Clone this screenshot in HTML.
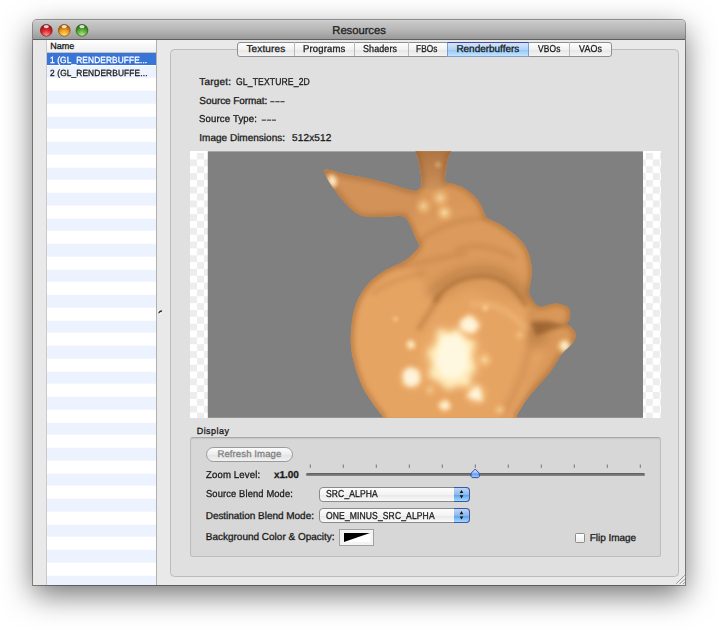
<!DOCTYPE html>
<html><head><meta charset="utf-8">
<style>
*{margin:0;padding:0;box-sizing:border-box}
html,body{width:719px;height:632px;overflow:hidden;background:#fff}
body{position:relative;font-family:"Liberation Sans",sans-serif;color:#1a1a1a}
.a{position:absolute}
.t{position:absolute;white-space:nowrap;font-size:9.6px;line-height:1;-webkit-text-stroke:.3px currentColor;text-rendering:geometricPrecision}
#win{left:33px;top:20px;width:652px;height:565px;background:#e9e9e9;border-radius:4px 4px 0 0;
 box-shadow:0 10px 30px rgba(0,0,0,.55),0 0 0 1px rgba(0,0,0,.38)}
#title{left:0;top:0;width:652px;height:19.5px;border-radius:4px 4px 0 0;
 background:linear-gradient(#d6d6d6 0,#c8c8c8 1.5px,#b8b8b8 50%,#9a9a9a 100%);
 border-bottom:1px solid #5e5e5e}
.tl{position:absolute;top:4.3px;width:12px;height:12px;border-radius:50%}
#red{left:7.3px;background:radial-gradient(circle at 50% 80%,#f7a3a8 0,#e8353a 55%,#a80d10 100%);box-shadow:inset 0 0 0 .6px #7c0f12}
#org{left:25.2px;background:radial-gradient(circle at 50% 80%,#ffe98a 0,#f3a425 55%,#b45d00 100%);box-shadow:inset 0 0 0 .6px #8a4a00}
#grn{left:43px;background:radial-gradient(circle at 50% 80%,#c4ee9c 0,#5fb83e 55%,#2a6d12 100%);box-shadow:inset 0 0 0 .6px #1d5a0c}
.tl::after{content:"";position:absolute;left:3.5px;top:1px;width:5px;height:3px;border-radius:50%;background:rgba(255,255,255,.75)}
</style></head><body>
<div id="win" class="a">
  <div id="title" class="a">
    <svg class="a" style="left:0;top:0" width="100" height="20"><radialGradient id="gr1" cx="50%" cy="85%" r="75%" fx="50%" fy="95%"><stop offset="0" stop-color="#f7a2a6"/><stop offset=".55" stop-color="#e3282d"/><stop offset="1" stop-color="#8e1414"/></radialGradient>
<circle cx="13.3" cy="10.3" r="5.9" fill="url(#gr1)" stroke="#6e1a1a" stroke-width=".7"/>
<ellipse cx="13.3" cy="6.6" rx="2.6" ry="1.7" fill="#fff" opacity=".8"/><radialGradient id="gr2" cx="50%" cy="85%" r="75%" fx="50%" fy="95%"><stop offset="0" stop-color="#ffe27a"/><stop offset=".55" stop-color="#f0a020"/><stop offset="1" stop-color="#a4540a"/></radialGradient>
<circle cx="31.25" cy="10.3" r="5.9" fill="url(#gr2)" stroke="#8a4a10" stroke-width=".7"/>
<ellipse cx="31.25" cy="6.6" rx="2.6" ry="1.7" fill="#fff" opacity=".8"/><radialGradient id="gr3" cx="50%" cy="85%" r="75%" fx="50%" fy="95%"><stop offset="0" stop-color="#c0ec98"/><stop offset=".55" stop-color="#5cb23a"/><stop offset="1" stop-color="#2b6a14"/></radialGradient>
<circle cx="49" cy="10.3" r="5.9" fill="url(#gr3)" stroke="#2a5a18" stroke-width=".7"/>
<ellipse cx="49" cy="6.6" rx="2.6" ry="1.7" fill="#fff" opacity=".8"/></svg>
    
  </div>
</div>

<!-- sidebar list -->
<div class="a" style="left:45.5px;top:39.5px;width:111px;height:545.5px;background:#fff;border-left:1px solid #c9c9c9;border-right:1px solid #b0b0b0;
 background-image:repeating-linear-gradient(#fff 0,#fff 12.75px,#edf3fe 12.75px,#edf3fe 25.5px);background-position:0 12.75px"></div>
<div class="a" style="left:46.5px;top:39.5px;width:109.5px;height:13px;background:linear-gradient(#fff,#f0f0f0);border-bottom:1px solid #c2c2c2"></div>
<div class="a" style="left:46.5px;top:52.5px;width:109.5px;height:12.3px;background:#3875d7"></div>

<!-- tab box -->
<div class="a" style="left:170px;top:48.5px;width:509.3px;height:528px;background:#e0e0e0;border:1px solid #bcbcbc;border-radius:4.5px"></div>

<!-- segmented tabs -->
<div class="a" style="left:237px;top:41.5px;width:375px;height:15px;border:1px solid #8e8e8e;border-radius:3px;background:linear-gradient(#fdfdfd,#f2f2f2 50%,#e6e6e6 51%,#f4f4f4)"></div>
<div class="a" style="left:446.5px;top:41.5px;width:82.5px;height:15px;border:1px solid #7f9ccc;border-top-color:#4a4aa6;border-bottom-color:#8a9cc0;background:linear-gradient(#d3e6fb,#b0d4f8 50%,#93c6f6 51%,#c2e6ff)"></div>
<div class="a" style="left:294px;top:42px;width:1px;height:14px;background:#b8b8b8"></div>
<div class="a" style="left:354px;top:42px;width:1px;height:14px;background:#b8b8b8"></div>
<div class="a" style="left:407.5px;top:42px;width:1px;height:14px;background:#b8b8b8"></div>
<div class="a" style="left:569px;top:42px;width:1px;height:14px;background:#b8b8b8"></div>

<!-- info labels -->

<!-- image area -->
<div class="a" style="left:189.7px;top:151.1px;width:18.3px;height:266.7px;background:conic-gradient(#ededed 25%,#fff 0 50%,#ededed 0 75%,#fff 0);background-size:14px 13.7px;background-position:0 1.55px"></div>
<div class="a" style="left:643px;top:151.1px;width:17.6px;height:266.7px;background:conic-gradient(#ededed 25%,#fff 0 50%,#ededed 0 75%,#fff 0);background-size:14px 13.7px;background-position:-4.2px 1.55px"></div>
<div class="a" style="left:189.7px;top:151.1px;width:470.9px;height:1.6px;background:#fff"></div>
<svg class="a" style="left:190px;top:151px" width="471" height="267" viewBox="190 151 471 267">
  <rect x="207.8" y="151.3" width="435.2" height="266.5" fill="#808080"/>
  
<defs>
 <clipPath id="imgclip"><rect x="207.8" y="151.3" width="435.2" height="266.5"/></clipPath>
 <clipPath id="silclip"><path d="M417.2,145.0 C411.8,147.5 418.0,155.7 418.5,160.0 C419.0,164.3 419.9,166.7 420.4,170.9 C420.9,175.2 422.3,182.2 421.4,185.5 C420.5,188.8 417.9,190.2 415.1,190.7 C412.3,191.2 409.2,189.8 404.7,188.6 C400.2,187.4 394.2,185.1 388.0,183.4 C381.8,181.7 374.1,179.7 367.2,178.2 C360.2,176.7 351.9,175.8 346.3,174.6 C340.7,173.4 337.3,171.7 333.8,170.9 C330.3,170.1 327.0,169.3 325.5,169.6 C324.0,169.9 324.5,170.9 324.8,172.5 C325.1,174.1 325.6,176.0 327.5,179.2 C329.4,182.4 332.8,187.5 335.9,191.7 C339.0,195.9 342.8,200.5 346.3,204.2 C349.8,207.8 353.2,211.5 356.7,213.6 C360.2,215.7 362.0,216.3 367.2,216.8 C372.4,217.3 382.1,216.9 388.0,216.8 C393.9,216.8 399.1,215.5 402.6,216.5 C406.1,217.5 406.8,219.4 409.0,223.0 C411.2,226.6 413.9,234.1 415.6,237.8 C417.3,241.5 418.8,243.0 419.0,245.0 C419.2,247.0 419.0,247.4 416.6,250.0 C414.2,252.6 410.1,257.2 404.5,260.8 C398.9,264.4 388.8,267.9 383.0,271.5 C377.2,275.1 373.2,278.7 369.6,282.3 C366.0,285.9 363.8,289.4 361.5,293.0 C359.2,296.6 357.7,299.3 356.1,303.8 C354.5,308.3 353.0,313.2 352.1,319.9 C351.2,326.6 350.4,336.4 350.8,344.0 C351.2,351.6 353.0,358.9 354.8,365.6 C356.6,372.3 358.8,378.6 361.5,384.4 C364.2,390.2 367.3,395.1 370.9,400.5 C374.5,405.9 379.8,412.6 383.0,416.7 C386.2,420.8 368.5,423.6 390.0,425.0 C411.5,426.4 490.9,426.6 512.0,425.0 C533.1,423.4 514.2,419.8 516.7,415.5 C519.2,411.2 523.2,404.1 527.0,399.0 C530.8,393.9 535.3,389.5 539.4,384.7 C543.5,379.9 547.9,375.3 551.7,370.2 C555.5,365.1 558.6,358.2 562.0,353.8 C565.4,349.4 570.0,346.6 572.3,343.5 C574.6,340.4 576.0,337.9 576.0,335.3 C576.0,332.7 573.8,330.0 572.3,328.1 C570.8,326.2 567.7,325.4 567.2,324.0 C566.7,322.6 569.0,321.7 569.5,319.8 C570.0,317.9 570.6,314.8 570.2,312.6 C569.8,310.4 569.2,308.0 567.2,306.5 C565.2,305.0 560.8,303.8 557.9,303.4 C555.0,303.0 552.8,303.9 549.7,304.4 C546.6,304.9 542.5,307.5 539.4,306.5 C536.3,305.5 532.9,300.9 531.2,298.2 C529.5,295.4 529.1,293.4 529.1,290.0 C529.1,286.6 530.9,282.1 531.3,277.9 C531.7,273.6 532.0,269.3 531.3,264.5 C530.5,259.7 529.4,253.8 526.8,249.0 C524.2,244.2 520.2,239.7 515.7,235.6 C511.2,231.5 504.8,227.4 500.0,224.5 C495.2,221.6 489.6,219.8 487.0,218.0 C484.4,216.2 486.1,216.4 484.6,213.4 C483.1,210.4 481.2,204.1 477.9,200.0 C474.6,195.9 469.2,191.4 465.0,188.6 C460.8,185.8 456.0,184.6 452.7,183.4 C449.4,182.2 446.4,184.1 445.4,181.3 C444.3,178.5 446.0,170.6 446.4,166.7 C446.8,162.8 447.3,161.6 448.0,158.0 C448.7,154.4 455.7,147.2 450.6,145.0 C445.5,142.8 422.6,142.5 417.2,145.0Z"/></clipPath>
 <filter id="b1" x="-50%" y="-50%" width="200%" height="200%"><feGaussianBlur stdDeviation="1.2"/></filter>
 <filter id="b15" x="-50%" y="-50%" width="200%" height="200%"><feGaussianBlur stdDeviation="2"/></filter>
 <filter id="b3" x="-50%" y="-50%" width="200%" height="200%"><feGaussianBlur stdDeviation="3.5"/></filter>
 <filter id="b2" x="-50%" y="-50%" width="200%" height="200%"><feGaussianBlur stdDeviation="2.5"/></filter>
 <filter id="b4" x="-50%" y="-50%" width="200%" height="200%"><feGaussianBlur stdDeviation="5"/></filter>
 <filter id="tex" x="0" y="0" width="100%" height="100%"><feTurbulence type="fractalNoise" baseFrequency="0.04" numOctaves="2" seed="7"/><feColorMatrix type="matrix" values="0 0 0 0 0  0 0 0 0 0  0 0 0 0 0  0 0 0 1 0"/><feDiffuseLighting surfaceScale="3" lighting-color="#fff"><feDistantLight azimuth="225" elevation="45"/></feDiffuseLighting></filter>
 <radialGradient id="hl"><stop offset="0" stop-color="#fff0c4" stop-opacity="1"/><stop offset=".35" stop-color="#ffdc9c" stop-opacity=".7"/><stop offset=".7" stop-color="#ffc880" stop-opacity=".25"/><stop offset="1" stop-color="#f5b070" stop-opacity="0"/></radialGradient>
 <linearGradient id="earg" x1="0" y1="0" x2="0" y2="1"><stop offset="0" stop-color="#a46b3a"/><stop offset=".7" stop-color="#c08550"/><stop offset="1" stop-color="#cf945a"/></linearGradient>
</defs>
<g clip-path="url(#imgclip)">
 <path d="M417.2,145.0 C411.8,147.5 418.0,155.7 418.5,160.0 C419.0,164.3 419.9,166.7 420.4,170.9 C420.9,175.2 422.3,182.2 421.4,185.5 C420.5,188.8 417.9,190.2 415.1,190.7 C412.3,191.2 409.2,189.8 404.7,188.6 C400.2,187.4 394.2,185.1 388.0,183.4 C381.8,181.7 374.1,179.7 367.2,178.2 C360.2,176.7 351.9,175.8 346.3,174.6 C340.7,173.4 337.3,171.7 333.8,170.9 C330.3,170.1 327.0,169.3 325.5,169.6 C324.0,169.9 324.5,170.9 324.8,172.5 C325.1,174.1 325.6,176.0 327.5,179.2 C329.4,182.4 332.8,187.5 335.9,191.7 C339.0,195.9 342.8,200.5 346.3,204.2 C349.8,207.8 353.2,211.5 356.7,213.6 C360.2,215.7 362.0,216.3 367.2,216.8 C372.4,217.3 382.1,216.9 388.0,216.8 C393.9,216.8 399.1,215.5 402.6,216.5 C406.1,217.5 406.8,219.4 409.0,223.0 C411.2,226.6 413.9,234.1 415.6,237.8 C417.3,241.5 418.8,243.0 419.0,245.0 C419.2,247.0 419.0,247.4 416.6,250.0 C414.2,252.6 410.1,257.2 404.5,260.8 C398.9,264.4 388.8,267.9 383.0,271.5 C377.2,275.1 373.2,278.7 369.6,282.3 C366.0,285.9 363.8,289.4 361.5,293.0 C359.2,296.6 357.7,299.3 356.1,303.8 C354.5,308.3 353.0,313.2 352.1,319.9 C351.2,326.6 350.4,336.4 350.8,344.0 C351.2,351.6 353.0,358.9 354.8,365.6 C356.6,372.3 358.8,378.6 361.5,384.4 C364.2,390.2 367.3,395.1 370.9,400.5 C374.5,405.9 379.8,412.6 383.0,416.7 C386.2,420.8 368.5,423.6 390.0,425.0 C411.5,426.4 490.9,426.6 512.0,425.0 C533.1,423.4 514.2,419.8 516.7,415.5 C519.2,411.2 523.2,404.1 527.0,399.0 C530.8,393.9 535.3,389.5 539.4,384.7 C543.5,379.9 547.9,375.3 551.7,370.2 C555.5,365.1 558.6,358.2 562.0,353.8 C565.4,349.4 570.0,346.6 572.3,343.5 C574.6,340.4 576.0,337.9 576.0,335.3 C576.0,332.7 573.8,330.0 572.3,328.1 C570.8,326.2 567.7,325.4 567.2,324.0 C566.7,322.6 569.0,321.7 569.5,319.8 C570.0,317.9 570.6,314.8 570.2,312.6 C569.8,310.4 569.2,308.0 567.2,306.5 C565.2,305.0 560.8,303.8 557.9,303.4 C555.0,303.0 552.8,303.9 549.7,304.4 C546.6,304.9 542.5,307.5 539.4,306.5 C536.3,305.5 532.9,300.9 531.2,298.2 C529.5,295.4 529.1,293.4 529.1,290.0 C529.1,286.6 530.9,282.1 531.3,277.9 C531.7,273.6 532.0,269.3 531.3,264.5 C530.5,259.7 529.4,253.8 526.8,249.0 C524.2,244.2 520.2,239.7 515.7,235.6 C511.2,231.5 504.8,227.4 500.0,224.5 C495.2,221.6 489.6,219.8 487.0,218.0 C484.4,216.2 486.1,216.4 484.6,213.4 C483.1,210.4 481.2,204.1 477.9,200.0 C474.6,195.9 469.2,191.4 465.0,188.6 C460.8,185.8 456.0,184.6 452.7,183.4 C449.4,182.2 446.4,184.1 445.4,181.3 C444.3,178.5 446.0,170.6 446.4,166.7 C446.8,162.8 447.3,161.6 448.0,158.0 C448.7,154.4 455.7,147.2 450.6,145.0 C445.5,142.8 422.6,142.5 417.2,145.0Z" fill="#d99859"/>
 <g clip-path="url(#silclip)">
  <path d="M350.0,342.0 C350.3,328.3 353.0,310.7 358.0,300.0 C363.0,289.3 369.7,284.3 380.0,278.0 C390.3,271.7 410.0,260.0 420.0,262.0 C430.0,264.0 431.7,287.0 440.0,290.0 C448.3,293.0 459.2,281.2 470.0,280.0 C480.8,278.8 495.5,278.8 505.0,283.0 C514.5,287.2 520.3,294.7 527.0,305.0 C533.7,315.3 544.5,332.5 545.0,345.0 C545.5,357.5 535.5,366.7 530.0,380.0 C524.5,393.3 538.3,417.5 512.0,425.0 C485.7,432.5 398.0,432.2 372.0,425.0 C346.0,417.8 359.7,395.8 356.0,382.0 C352.3,368.2 349.7,355.7 350.0,342.0Z" fill="#e6a463" filter="url(#b4)"/>
  <path d="M412.0,232.0 C417.0,224.0 430.3,218.0 440.0,214.0 C449.7,210.0 460.0,206.7 470.0,208.0 C480.0,209.3 491.7,217.0 500.0,222.0 C508.3,227.0 514.8,230.0 520.0,238.0 C525.2,246.0 529.7,259.7 531.0,270.0 C532.3,280.3 533.2,295.0 528.0,300.0 C522.8,305.0 509.7,301.7 500.0,300.0 C490.3,298.3 480.0,290.0 470.0,290.0 C460.0,290.0 450.0,304.7 440.0,300.0 C430.0,295.3 414.7,273.3 410.0,262.0 C405.3,250.7 407.0,240.0 412.0,232.0Z" fill="#dc9b5c" filter="url(#b4)"/>
  <path d="M410.0,140.0 C416.5,135.0 451.8,135.0 458.0,140.0 C464.2,145.0 449.0,162.3 447.0,170.0 C445.0,177.7 448.5,182.7 446.0,186.0 C443.5,189.3 436.7,190.0 432.0,190.0 C427.3,190.0 420.2,189.3 418.0,186.0 C415.8,182.7 420.3,177.7 419.0,170.0 C417.7,162.3 403.5,145.0 410.0,140.0Z" fill="url(#earg)" filter="url(#b1)"/>
  <path d="M322.0,166.0 C324.5,164.5 335.3,170.5 345.0,173.0 C354.7,175.5 368.8,178.3 380.0,181.0 C391.2,183.7 405.3,185.8 412.0,189.0 C418.7,192.2 420.3,195.3 420.0,200.0 C419.7,204.7 416.7,214.3 410.0,217.0 C403.3,219.7 390.0,218.2 380.0,216.0 C370.0,213.8 358.3,209.7 350.0,204.0 C341.7,198.3 334.7,188.3 330.0,182.0 C325.3,175.7 319.5,167.5 322.0,166.0Z" fill="#d29258" filter="url(#b2)"/>
  <path d="M417.2,145.0 C411.8,147.5 418.0,155.7 418.5,160.0 C419.0,164.3 419.9,166.7 420.4,170.9 C420.9,175.2 422.3,182.2 421.4,185.5 C420.5,188.8 417.9,190.2 415.1,190.7 C412.3,191.2 409.2,189.8 404.7,188.6 C400.2,187.4 394.2,185.1 388.0,183.4 C381.8,181.7 374.1,179.7 367.2,178.2 C360.2,176.7 351.9,175.8 346.3,174.6 C340.7,173.4 337.3,171.7 333.8,170.9 C330.3,170.1 327.0,169.3 325.5,169.6 C324.0,169.9 324.5,170.9 324.8,172.5 C325.1,174.1 325.6,176.0 327.5,179.2 C329.4,182.4 332.8,187.5 335.9,191.7 C339.0,195.9 342.8,200.5 346.3,204.2 C349.8,207.8 353.2,211.5 356.7,213.6 C360.2,215.7 362.0,216.3 367.2,216.8 C372.4,217.3 382.1,216.9 388.0,216.8 C393.9,216.8 399.1,215.5 402.6,216.5 C406.1,217.5 406.8,219.4 409.0,223.0 C411.2,226.6 413.9,234.1 415.6,237.8 C417.3,241.5 418.8,243.0 419.0,245.0 C419.2,247.0 419.0,247.4 416.6,250.0 C414.2,252.6 410.1,257.2 404.5,260.8 C398.9,264.4 388.8,267.9 383.0,271.5 C377.2,275.1 373.2,278.7 369.6,282.3 C366.0,285.9 363.8,289.4 361.5,293.0 C359.2,296.6 357.7,299.3 356.1,303.8 C354.5,308.3 353.0,313.2 352.1,319.9 C351.2,326.6 350.4,336.4 350.8,344.0 C351.2,351.6 353.0,358.9 354.8,365.6 C356.6,372.3 358.8,378.6 361.5,384.4 C364.2,390.2 367.3,395.1 370.9,400.5 C374.5,405.9 379.8,412.6 383.0,416.7 C386.2,420.8 368.5,423.6 390.0,425.0 C411.5,426.4 490.9,426.6 512.0,425.0 C533.1,423.4 514.2,419.8 516.7,415.5 C519.2,411.2 523.2,404.1 527.0,399.0 C530.8,393.9 535.3,389.5 539.4,384.7 C543.5,379.9 547.9,375.3 551.7,370.2 C555.5,365.1 558.6,358.2 562.0,353.8 C565.4,349.4 570.0,346.6 572.3,343.5 C574.6,340.4 576.0,337.9 576.0,335.3 C576.0,332.7 573.8,330.0 572.3,328.1 C570.8,326.2 567.7,325.4 567.2,324.0 C566.7,322.6 569.0,321.7 569.5,319.8 C570.0,317.9 570.6,314.8 570.2,312.6 C569.8,310.4 569.2,308.0 567.2,306.5 C565.2,305.0 560.8,303.8 557.9,303.4 C555.0,303.0 552.8,303.9 549.7,304.4 C546.6,304.9 542.5,307.5 539.4,306.5 C536.3,305.5 532.9,300.9 531.2,298.2 C529.5,295.4 529.1,293.4 529.1,290.0 C529.1,286.6 530.9,282.1 531.3,277.9 C531.7,273.6 532.0,269.3 531.3,264.5 C530.5,259.7 529.4,253.8 526.8,249.0 C524.2,244.2 520.2,239.7 515.7,235.6 C511.2,231.5 504.8,227.4 500.0,224.5 C495.2,221.6 489.6,219.8 487.0,218.0 C484.4,216.2 486.1,216.4 484.6,213.4 C483.1,210.4 481.2,204.1 477.9,200.0 C474.6,195.9 469.2,191.4 465.0,188.6 C460.8,185.8 456.0,184.6 452.7,183.4 C449.4,182.2 446.4,184.1 445.4,181.3 C444.3,178.5 446.0,170.6 446.4,166.7 C446.8,162.8 447.3,161.6 448.0,158.0 C448.7,154.4 455.7,147.2 450.6,145.0 C445.5,142.8 422.6,142.5 417.2,145.0Z" fill="none" stroke="#8a5326" stroke-width="6" opacity=".4" filter="url(#b2)"/>
  
 <path d="M418,243 C432,228 460,218 487,218" stroke="#94592a" stroke-width="4" fill="none" opacity=".22" filter="url(#b2)"/>
 <path d="M434,302 C446,284 464,276 484,276 C502,277 516,288 526,306" stroke="#7e4a1c" stroke-width="3" fill="none" opacity=".45" filter="url(#b15)"/>
 <path d="M430,296 C444,278 464,270 486,270 C505,272 518,284 528,300" stroke="#8a5226" stroke-width="10" fill="none" opacity=".3" filter="url(#b4)"/>
 <path d="M440,296 C433,306 426,318 418,330" stroke="#85501f" stroke-width="5" fill="none" opacity=".3" filter="url(#b2)"/>
 <path d="M531,322 L548,321 L568,325.5 L552,330 L536,336 Z" fill="#7a4a20" opacity=".55" filter="url(#b15)"/>
 <ellipse cx="538" cy="335" rx="9" ry="14" fill="#85501f" opacity=".3" filter="url(#b4)"/>
 <path d="M530,308 C534,325 532,345 524,370 C518,388 510,402 502,418" stroke="#8a5226" stroke-width="6" fill="none" opacity=".22" filter="url(#b3)"/>
 <path d="M455,250 C475,242 495,246 515,258" stroke="#94592a" stroke-width="4" fill="none" opacity=".2" filter="url(#b2)"/>
 <path d="M400,268 C420,262 440,258 467,253" stroke="#94592a" stroke-width="4" fill="none" opacity=".2" filter="url(#b2)"/>
 <path d="M372,294 C388,282 405,276 425,273" stroke="#94592a" stroke-width="4" fill="none" opacity=".2" filter="url(#b2)"/>
 <path d="M470,305 C490,300 510,310 527,330" stroke="#ffd9a0" stroke-width="6" fill="none" opacity=".25" filter="url(#b2)"/>

  <circle cx="452" cy="358" r="40" fill="url(#hl)" opacity="0.8"/><path d="M438.0,328.0 L450.0,333.0 L460.0,327.0 L466.0,338.0 L476.0,342.0 L471.0,356.0 L476.0,368.0 L469.0,378.0 L473.0,388.0 L458.0,385.0 L448.0,390.0 L440.0,382.0 L428.0,376.0 L433.0,364.0 L427.0,352.0 L436.0,345.0Z" fill="#ffeec0" opacity="1" filter="url(#b3)"/><path d="M443.0,337.0 L457.0,335.0 L467.0,346.0 L467.0,368.0 L456.0,379.0 L443.0,376.0 L436.0,362.0 L439.0,348.0Z" fill="#fff8e0" opacity="1" filter="url(#b2)"/><circle cx="470" cy="325" r="16" fill="url(#hl)" opacity="0.8"/><path d="M459.8,321.6 L469.8,315.0 L479.7,325.0 L473.1,333.3 L461.4,330.0Z" fill="#fff8e2" opacity="0.9" filter="url(#b2)"/><circle cx="411.6" cy="378" r="17" fill="url(#hl)" opacity="0.8"/><path d="M403.0,372.0 L410.0,367.0 L419.0,371.0 L420.0,382.0 L412.0,387.0 L404.0,384.0Z" fill="#fff8e2" opacity="0.9" filter="url(#b2)"/><circle cx="410.8" cy="345" r="9" fill="url(#hl)" opacity="0.6"/><path d="M407.0,342.0 L412.0,340.0 L415.0,346.0 L410.0,349.0Z" fill="#fff8e2" opacity="0.6" filter="url(#b15)"/><circle cx="476" cy="394" r="16" fill="url(#hl)" opacity="0.8"/><path d="M466.4,396.4 L478.0,384.8 L483.0,401.4Z" fill="#fff8e2" opacity="0.9" filter="url(#b2)"/><circle cx="444.8" cy="405.5" r="11" fill="url(#hl)" opacity="0.7"/><path d="M438.0,405.0 L446.0,400.0 L451.0,407.0 L444.0,410.0Z" fill="#fff8e2" opacity="0.7" filter="url(#b15)"/><circle cx="484.7" cy="359.8" r="11" fill="url(#hl)" opacity="0.55"/><circle cx="564.4" cy="346.7" r="11" fill="url(#hl)" opacity="0.75"/><path d="M560.0,344.0 L566.0,340.0 L570.0,347.0 L563.0,351.0Z" fill="#fff8e2" opacity="0.7" filter="url(#b15)"/><circle cx="485.3" cy="308" r="7" fill="url(#hl)" opacity="0.45"/><circle cx="423.5" cy="206.3" r="11" fill="url(#hl)" opacity="0.55"/><circle cx="440.2" cy="198" r="12" fill="url(#hl)" opacity="0.6"/><circle cx="444.4" cy="212.6" r="11" fill="url(#hl)" opacity="0.7"/><circle cx="332" cy="181" r="9" fill="url(#hl)" opacity="0.8"/><path d="M328.0,174.0 L333.0,176.0 L337.0,186.0 L332.0,187.0Z" fill="#fff8e2" opacity="0.7" filter="url(#b15)"/><circle cx="395.5" cy="319" r="6" fill="url(#hl)" opacity="0.35"/><circle cx="438" cy="164.6" r="6" fill="url(#hl)" opacity="0.3"/><circle cx="500" cy="410" r="9" fill="url(#hl)" opacity="0.45"/><circle cx="520" cy="335" r="9" fill="url(#hl)" opacity="0.3"/><circle cx="430" cy="390" r="10" fill="url(#hl)" opacity="0.35"/>
 </g>
</g>

</svg>

<!-- display box -->
<div class="a" style="left:190px;top:437.2px;width:470.5px;height:120.2px;background:#d7d7d7;border:1px solid #bdbdbd;border-top-color:#a9a9a9;border-radius:3px;box-shadow:inset 0 1px 1px rgba(0,0,0,.08)"></div>
<div class="a" style="left:205.8px;top:447px;width:87px;height:15.3px;border:1px solid #9b9b9b;border-radius:8px;background:linear-gradient(#fbfbfb,#ededed 50%,#e2e2e2 51%,#f2f2f2)"></div>

<div class="a" style="left:305.6px;top:472.8px;width:339.4px;height:3.4px;border-radius:2px;background:linear-gradient(#5a5a5a,#8a8a8a)"></div>
<svg class="a" style="left:0;top:0" width="719" height="632"><rect x="309.8" y="464.5" width="0.9" height="3.4" fill="#6a6a6a"/><rect x="342.8" y="464.5" width="0.9" height="3.4" fill="#6a6a6a"/><rect x="375.8" y="464.5" width="0.9" height="3.4" fill="#6a6a6a"/><rect x="408.8" y="464.5" width="0.9" height="3.4" fill="#6a6a6a"/><rect x="441.8" y="464.5" width="0.9" height="3.4" fill="#6a6a6a"/><rect x="474.8" y="464.5" width="0.9" height="3.4" fill="#6a6a6a"/><rect x="507.8" y="464.5" width="0.9" height="3.4" fill="#6a6a6a"/><rect x="540.8" y="464.5" width="0.9" height="3.4" fill="#6a6a6a"/><rect x="573.8" y="464.5" width="0.9" height="3.4" fill="#6a6a6a"/><rect x="606.8" y="464.5" width="0.9" height="3.4" fill="#6a6a6a"/><rect x="639.8" y="464.5" width="0.9" height="3.4" fill="#6a6a6a"/></svg>
<svg class="a" style="left:0;top:0" width="719" height="632"><defs><linearGradient id="kg" x1="0" y1="0" x2="0" y2="1"><stop offset="0" stop-color="#d9ecff"/><stop offset=".5" stop-color="#8cc0f7"/><stop offset=".55" stop-color="#5a9cef"/><stop offset="1" stop-color="#9fd2ff"/></linearGradient></defs>
<path d="M475.2,469 L479.3,473.2 L479.3,476.6 L478.3,477.6 L472.1,477.6 L471.1,476.6 L471.1,473.2 Z" fill="url(#kg)" stroke="#3b3f9e" stroke-width="0.9"/></svg>


<div class="a" style="left:319px;top:487px;width:150.5px;height:15px;border:1px solid #8a8a8a;border-radius:4px;background:linear-gradient(#fdfdfd,#f3f3f3 50%,#e8e8e8 51%,#f9f9f9)"></div>
<div class="a" style="left:454px;top:487px;width:15.5px;height:15px;border:1px solid #3f56a6;border-left:none;border-radius:0 4px 4px 0;background:linear-gradient(#bcd6f5,#8cb8ee 50%,#5d9bea 51%,#9fdcff)"></div>

<div class="a" style="left:319px;top:508.2px;width:150.5px;height:15px;border:1px solid #8a8a8a;border-radius:4px;background:linear-gradient(#fdfdfd,#f3f3f3 50%,#e8e8e8 51%,#f9f9f9)"></div>
<div class="a" style="left:454px;top:508.2px;width:15.5px;height:15px;border:1px solid #3f56a6;border-left:none;border-radius:0 4px 4px 0;background:linear-gradient(#bcd6f5,#8cb8ee 50%,#5d9bea 51%,#9fdcff)"></div>

<svg class="a" style="left:0;top:0" width="719" height="632">
  <path d="M459.7,493 L461.5,489.9 L463.3,493Z M459.7,495.3 L461.5,498.4 L463.3,495.3Z" fill="#111"/>
  <path d="M459.7,514.2 L461.5,511.1 L463.3,514.2Z M459.7,516.5 L461.5,519.6 L463.3,516.5Z" fill="#111"/>
</svg>

<div class="a" style="left:338.8px;top:528.5px;width:35.5px;height:17.7px;background:#f4f4f4;border:1px solid #a0a0a0"></div>
<svg class="a" style="left:343.8px;top:533.2px" width="26" height="9"><path d="M0,0H26V9H0Z" fill="#fff"/><path d="M0,0H26L0,9Z" fill="#000"/></svg>

<div class="a" style="left:574.8px;top:533.2px;width:9.8px;height:9.5px;border:1px solid #8d8d8d;border-radius:1.5px;background:linear-gradient(#fff,#ececec)"></div>

<svg class="a" style="left:0;top:0" width="719" height="632"><rect x="270.3" y="101.0" width="4.2" height="1.3" fill="#505050"/><rect x="275.4" y="101.0" width="4.2" height="1.3" fill="#505050"/><rect x="280.4" y="101.0" width="4.2" height="1.3" fill="#505050"/><rect x="261.7" y="119.5" width="4.2" height="1.3" fill="#505050"/><rect x="266.8" y="119.5" width="4.2" height="1.3" fill="#505050"/><rect x="271.8" y="119.5" width="4.2" height="1.3" fill="#505050"/></svg>
<svg class="a" style="left:0;top:0" width="719" height="632">
<path d="M676.3,583.7 L684.7,575.3 M679.6,584.1 L684.7,579 M683.1,584 L684.9,582.2" stroke="#8c8c8c" stroke-width=".9"/>
<path d="M677.3,584.4 L685,576.7 M680.6,584.6 L685,580.3" stroke="#fff" stroke-width=".7"/>
</svg>
<svg class="a" style="left:0;top:0" width="719" height="632"><path d="M158.2,313 Q159.5,309.8 161.8,310.2 Q162.6,311.5 161.2,312 Q159.8,312.3 158.8,313.6Z" fill="#222"/><circle cx="160.8" cy="313.3" r=".9" fill="#fff"/></svg>
<div class="t" style="left:332.30px;top:25.93px;font-size:11.30px;letter-spacing:-0.062px;font-weight:400;color:#202020">Resources</div>
<div class="t" style="left:50.20px;top:42.28px;font-size:9.00px;letter-spacing:0.033px;font-weight:400;color:#1a1a1a">Name</div>
<div class="t" style="left:49.80px;top:56.18px;font-size:9.00px;letter-spacing:0.150px;font-weight:400;color:#ffffff;transform:scaleX(0.9219);transform-origin:0.00px 0">1 (GL_RENDERBUFFE...</div>
<div class="t" style="left:49.50px;top:68.98px;font-size:9.00px;letter-spacing:0.150px;font-weight:400;color:#1a1a1a;transform:scaleX(0.9248);transform-origin:0.00px 0">2 (GL_RENDERBUFFE...</div>
<div class="t" style="left:246.40px;top:45.03px;font-size:10.00px;letter-spacing:0.143px;font-weight:400;color:#1a1a1a">Textures</div>
<div class="t" style="left:303.10px;top:45.03px;font-size:10.00px;letter-spacing:0.150px;font-weight:400;color:#1a1a1a;transform:scaleX(0.9533);transform-origin:0.00px 0">Programs</div>
<div class="t" style="left:363.40px;top:45.03px;font-size:10.00px;letter-spacing:0.150px;font-weight:400;color:#1a1a1a;transform:scaleX(0.8923);transform-origin:0.00px 0">Shaders</div>
<div class="t" style="left:416.40px;top:45.03px;font-size:10.00px;letter-spacing:0.150px;font-weight:400;color:#1a1a1a;transform:scaleX(0.8269);transform-origin:0.00px 0">FBOs</div>
<div class="t" style="left:456.40px;top:45.03px;font-size:10.00px;letter-spacing:-0.025px;font-weight:400;color:#1a1a1a">Renderbuffers</div>
<div class="t" style="left:537.90px;top:45.03px;font-size:10.00px;letter-spacing:0.150px;font-weight:400;color:#1a1a1a;transform:scaleX(0.8407);transform-origin:0.00px 0">VBOs</div>
<div class="t" style="left:579.00px;top:45.03px;font-size:10.00px;letter-spacing:0.150px;font-weight:400;color:#1a1a1a;transform:scaleX(0.8846);transform-origin:0.00px 0">VAOs</div>
<div class="t" style="left:199.30px;top:78.23px;font-size:10.00px;letter-spacing:0.183px;font-weight:400;color:#1a1a1a">Target:</div>
<div class="t" style="left:235.90px;top:78.23px;font-size:10.00px;letter-spacing:0.150px;font-weight:400;color:#1a1a1a;transform:scaleX(0.8605);transform-origin:0.00px 0">GL_TEXTURE_2D</div>
<div class="t" style="left:199.30px;top:96.83px;font-size:10.00px;letter-spacing:-0.069px;font-weight:400;color:#1a1a1a">Source Format:</div>
<div class="t" style="left:199.30px;top:114.63px;font-size:10.00px;letter-spacing:0.150px;font-weight:400;color:#1a1a1a;transform:scaleX(0.9600);transform-origin:0.00px 0">Source Type:</div>
<div class="t" style="left:199.30px;top:133.73px;font-size:10.00px;letter-spacing:0.006px;font-weight:400;color:#1a1a1a">Image Dimensions:</div>
<div class="t" style="left:292.00px;top:133.73px;font-size:10.00px;letter-spacing:0.150px;font-weight:400;color:#1a1a1a">512x512</div>
<div class="t" style="left:196.70px;top:426.88px;font-size:9.00px;letter-spacing:0.450px;font-weight:400;color:#1a1a1a">Display</div>
<div class="t" style="left:217.40px;top:450.27px;font-size:9.60px;letter-spacing:0.083px;font-weight:400;color:#838383">Refresh Image</div>
<div class="t" style="left:205.70px;top:470.53px;font-size:10.00px;letter-spacing:0.150px;font-weight:400;color:#1a1a1a;transform:scaleX(0.9571);transform-origin:0.00px 0">Zoom Level:</div>
<div class="t" style="left:273.90px;top:470.53px;font-size:10.00px;letter-spacing:-0.025px;font-weight:700;color:#1a1a1a">x1.00</div>
<div class="t" style="left:205.70px;top:490.33px;font-size:10.00px;letter-spacing:0.150px;font-weight:400;color:#1a1a1a;transform:scaleX(0.9323);transform-origin:0.00px 0">Source Blend Mode:</div>
<div class="t" style="left:205.70px;top:511.83px;font-size:10.00px;letter-spacing:-0.032px;font-weight:400;color:#1a1a1a">Destination Blend Mode:</div>
<div class="t" style="left:326.10px;top:490.23px;font-size:10.00px;letter-spacing:0.150px;font-weight:400;color:#1a1a1a;transform:scaleX(0.8525);transform-origin:0.00px 0">SRC_ALPHA</div>
<div class="t" style="left:326.00px;top:511.53px;font-size:10.00px;letter-spacing:0.150px;font-weight:400;color:#1a1a1a;transform:scaleX(0.8539);transform-origin:0.00px 0">ONE_MINUS_SRC_ALPHA</div>
<div class="t" style="left:205.80px;top:533.13px;font-size:10.00px;letter-spacing:-0.008px;font-weight:400;color:#1a1a1a">Background Color &amp; Opacity:</div>
<div class="t" style="left:589.80px;top:533.73px;font-size:10.00px;letter-spacing:-0.044px;font-weight:400;color:#1a1a1a">Flip Image</div>
</body></html>
